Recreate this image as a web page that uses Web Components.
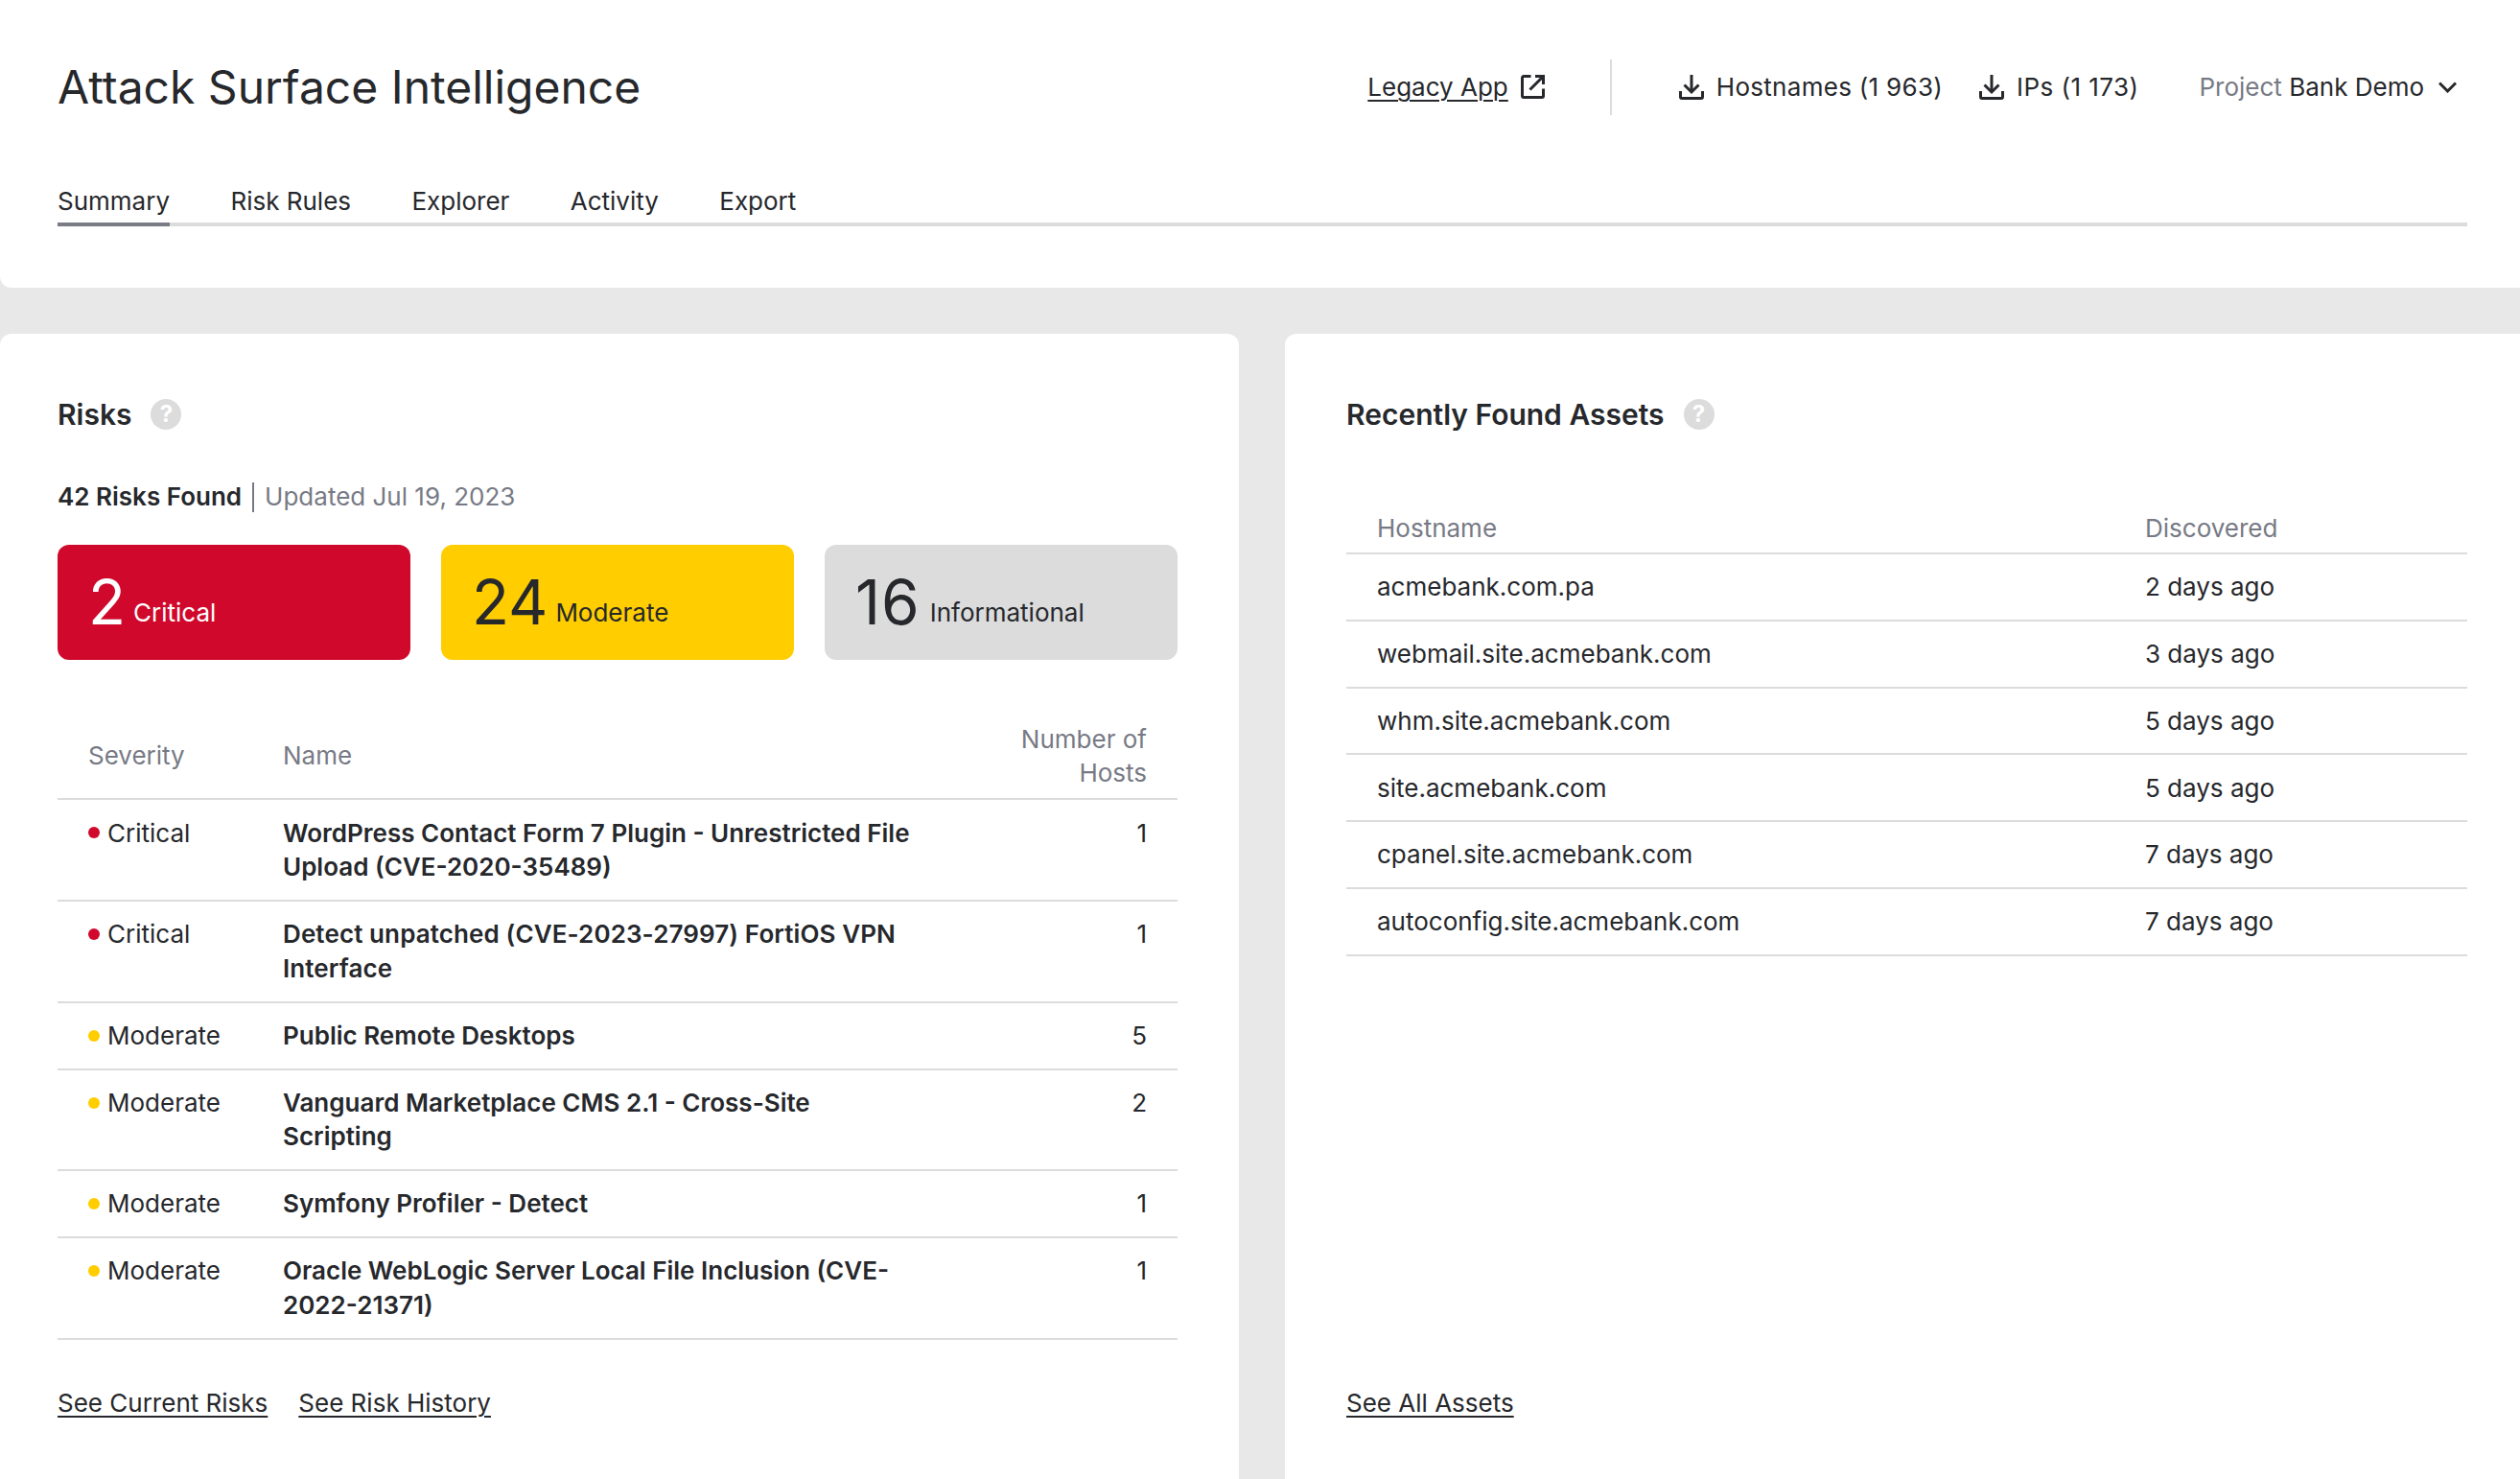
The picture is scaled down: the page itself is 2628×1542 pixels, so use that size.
<!DOCTYPE html>
<html><head><meta charset="utf-8">
<style>
html,body{margin:0;padding:0;background:#e8e8e8;height:1542px;overflow:hidden}
body{font-family:Inter,"Liberation Sans",sans-serif;color:#26282c;font-size:26px;line-height:35.67px}
</style></head><body>
<asi-app></asi-app>
<script>
const ICONS={
 ext:'<svg viewBox="0 0 25 25" width="25" height="25" fill="none" stroke="currentColor" stroke-width="3"><path d="M10.5 1.5H3A1.5 1.5 0 0 0 1.5 3v19A1.5 1.5 0 0 0 3 23.5h19a1.5 1.5 0 0 0 1.5-1.5v-7.500"/><path d="M9.500 15.500 22.500 2.500"/><path d="M15 1.500h8.500V10"/></svg>',
 dl:'<svg viewBox="0 0 26 26" width="26" height="26" fill="none" stroke="currentColor" stroke-width="3"><path d="M13 0v18"/><path d="M5.500 10.500 13 18l7.500-7.500"/><path d="M1.500 17v6a1.500 1.500 0 0 0 1.500 1.500h20a1.500 1.500 0 0 0 1.500-1.500v-6"/></svg>',
 chev:'<svg viewBox="0 0 19 12" width="19" height="12" fill="none" stroke="currentColor" stroke-width="3"><path d="M1 1.500l8.500 8.500L18 1.500"/></svg>'
};
function define(name,css,html){
 customElements.define(name,class extends HTMLElement{
  constructor(){super();const s=this.attachShadow({mode:'open'});s.innerHTML='<style>'+css+'</style>'+(typeof html==='function'?html(this):html);}
 });
}
define('asi-link',`:host{display:inline;color:#26282c}a{color:inherit;text-decoration:underline;text-underline-offset:4px;text-decoration-thickness:2px}`,`<a href="#"><slot></slot></a>`);
define('asi-help',`:host{display:inline-flex;width:32px;height:32px;border-radius:50%;background:#dcdcdc;color:#fff;align-items:center;justify-content:center;font:700 24px/32px Inter,sans-serif}`,`?`);
define('asi-tab',`:host{display:block;padding:0 0 4px;line-height:36px;height:36px;border-bottom:4px solid transparent}:host([active]){border-bottom-color:#797b85}`,`<slot></slot>`);
define('asi-stat',`:host{display:block;height:120px;box-sizing:border-box;border-radius:12px;padding:0 32px;background:var(--bg);color:var(--fg);line-height:119px;white-space:nowrap}
.n{font-size:64px;margin-right:var(--nm,9px);letter-spacing:var(--ls,0)}.l{font-size:26px;vertical-align:3px}`,`<span class="n"><slot name="n"></slot></span><span class="l"><slot></slot></span>`);
define('asi-sev',`:host{display:flex;align-items:center;gap:8px;align-self:start;color:#26282c}i{width:12px;height:12px;border-radius:50%;background:var(--c);flex:none}`,`<i></i><slot></slot>`);
define('asi-card',`:host{display:flex;flex-direction:column;background:#fff;border-radius:var(--rad);box-sizing:border-box;height:1194px}
.h{display:flex;align-items:center;gap:20px;font-weight:600;font-size:30px;line-height:40px;padding:64px 0 0 var(--pad)}`,`<div class="h"><slot name="title"></slot><asi-help></asi-help></div><slot></slot>`);
define('asi-row',`:host{display:grid;grid-template-columns:var(--cols);border-bottom:2px solid #dcdcdc;padding:var(--rp,16.17px) 32px;box-sizing:border-box}`,`<slot></slot>`);
define('asi-header',`:host{display:block;background:#fff;height:300px;box-sizing:border-box;padding:0 55px 0 60px;border-radius:0 0 0 12px}
.top{display:flex;align-items:center;height:180px;box-sizing:border-box;padding-top:2px}
h1{font-size:48px;font-weight:400;margin:0;flex:1;line-height:60px}
.act{display:flex;align-items:center;gap:13px;white-space:nowrap}
.sep{width:2px;height:58px;background:#dcdcdc;margin:0 70px 0 68px}
.ic{display:inline-flex}
.p{color:#777a85}
.tabs{display:flex;gap:63.4px;border-bottom:4px solid #dcdcdc;height:44px;margin-top:12px;box-sizing:border-box;align-items:flex-start}
`,`<div class="top"><h1>Attack Surface Intelligence</h1>
<div class="act"><asi-link>Legacy App</asi-link><span class="ic">${ICONS.ext}</span></div>
<div class="sep"></div>
<div class="act"><span class="ic">${ICONS.dl}</span><span style="letter-spacing:.3px">Hostnames (1 963)</span></div>
<div class="act" style="margin-left:38px"><span class="ic">${ICONS.dl}</span><span style="letter-spacing:.45px">IPs (1 173)</span></div>
<div class="act" style="margin-left:63px;margin-right:11px;gap:15px"><span><span class="p">Project</span> Bank Demo</span><span class="ic">${ICONS.chev}</span></div>
</div>
<div class="tabs"><asi-tab active>Summary</asi-tab><asi-tab>Risk Rules</asi-tab><asi-tab>Explorer</asi-tab><asi-tab>Activity</asi-tab><asi-tab>Export</asi-tab></div>`);
const RISKS=[
 ['c','Critical','WordPress Contact Form 7 Plugin - Unrestricted File Upload (CVE-2020-35489)','1'],
 ['c','Critical','Detect unpatched (CVE-2023-27997) FortiOS VPN Interface','1',.11],
 ['m','Moderate','Public Remote Desktops','5'],
 ['m','Moderate','Vanguard Marketplace CMS 2.1 - Cross-Site Scripting','2'],
 ['m','Moderate','Symfony Profiler - Detect','1'],
 ['m','Moderate','Oracle WebLogic Server Local File Inclusion (CVE-2022-21371)','1']];
const ASSETS=[['acmebank.com.pa','2 days ago'],['webmail.site.acmebank.com','3 days ago'],['whm.site.acmebank.com','5 days ago'],['site.acmebank.com','5 days ago'],['cpanel.site.acmebank.com','7 days ago'],['autoconfig.site.acmebank.com','7 days ago']];
define('asi-risks',`:host{display:flex;flex-direction:column;flex:1;padding:0 64px 61px 60px;--cols:203px 662px 1fr}
.sum{margin-top:48px;line-height:36px;display:flex;align-items:center;height:36px}
b{font-weight:600}.u{color:#777a85}
.bar{width:2px;height:31px;background:#777a85;margin:0 11px}
.stats{display:grid;grid-template-columns:repeat(3,368px);gap:32px;margin-top:32px}
.hd{color:#777a85;align-items:center;padding:13.5px 32px 8.5px;margin-top:51px}
.r{text-align:right}.name{font-weight:600}
.links{display:flex;gap:32px;margin-top:auto;line-height:36px}
`,()=>`<div class="sum"><b>42 Risks Found</b><span class="bar"></span><span class="u">Updated Jul 19, 2023</span></div>
<div class="stats">
<asi-stat style="--bg:#d0092c;--fg:#fff;--nm:8px"><span slot="n">2</span>Critical</asi-stat>
<asi-stat style="--bg:#ffcd00;--fg:#26282c;--nm:8px"><span slot="n">24</span>Moderate</asi-stat>
<asi-stat style="--bg:#dcdcdc;--fg:#26282c;--nm:10px;--ls:1px"><span slot="n">16</span>Informational</asi-stat></div>
<asi-row class="hd"><span>Severity</span><span>Name</span><span class="r">Number of<br>Hosts</span></asi-row>
${RISKS.map(r=>`<asi-row><asi-sev style="--c:${r[0]=='c'?'#d0092c':'#ffcd00'}">${r[1]}</asi-sev><span class="name"${r[4]?` style="letter-spacing:${r[4]}px"`:''}>${r[2]}</span><span class="r">${r[3]}</span></asi-row>`).join('')}
<div class="links"><asi-link>See Current Risks</asi-link><asi-link>See Risk History</asi-link></div>`);
define('asi-assets',`:host{display:flex;flex-direction:column;flex:1;padding:0 55px 61px 64px;--cols:801px 1fr;--rp:16.08px}
.hd{color:#777a85;margin-top:80.5px;padding:0 32px 7.5px;line-height:36px}
.links{margin-top:auto;line-height:36px}`,()=>`<asi-row class="hd"><span>Hostname</span><span>Discovered</span></asi-row>
${ASSETS.map(a=>`<asi-row><span>${a[0]}</span><span>${a[1]}</span></asi-row>`).join('')}
<div class="links"><asi-link>See All Assets</asi-link></div>`);
define('asi-app',`:host{display:block}.p{display:grid;grid-template-columns:1292px 1288px;gap:48px;margin-top:48px}`,`<asi-header></asi-header><div class="p">
<asi-card style="--pad:60px;--rad:12px 12px 0 0"><span slot="title">Risks</span><asi-risks></asi-risks></asi-card>
<asi-card style="--pad:64px;--rad:12px 0 0 0"><span slot="title">Recently Found Assets</span><asi-assets></asi-assets></asi-card></div>`);
</script>
</body></html>
